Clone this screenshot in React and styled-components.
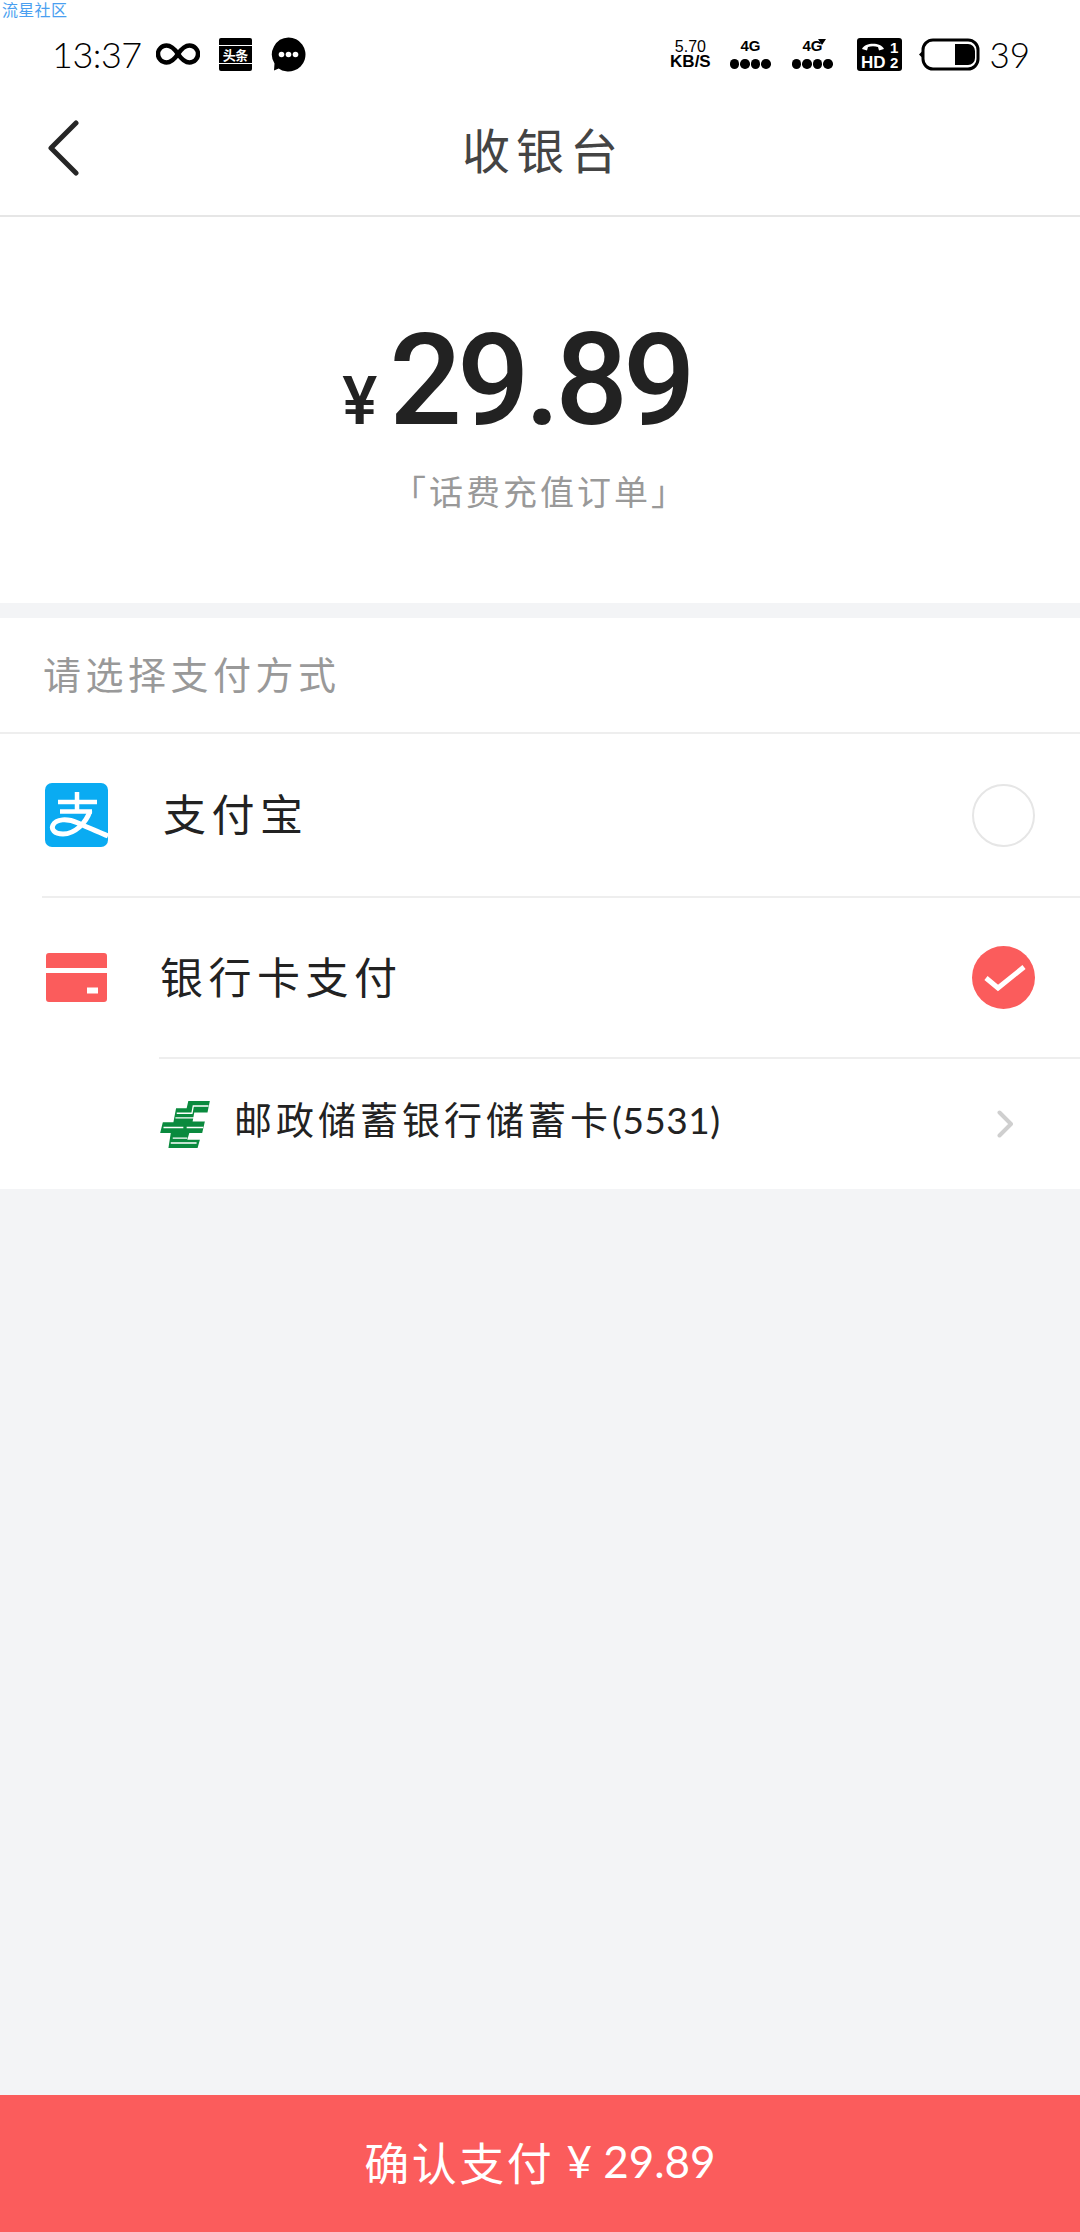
import React from 'react'
import styled, { createGlobalStyle } from 'styled-components'

const cjk = `"Noto Sans CJK SC", "Noto Sans", sans-serif`

const GlobalStyle = createGlobalStyle`
  html, body {
    margin: 0;
    padding: 0;
    background: #f3f4f6;
    font-family: ${cjk};
  }
`
const Page = styled.div`
  position: relative;
  width: 1080px;
  height: 2232px;
  display: flex;
  flex-direction: column;
  overflow: hidden;
`
const Watermark = styled.div`
  position: absolute;
  top: 1px;
  left: 2px;
  font-size: 16px;
  line-height: 16px;
  letter-spacing: 0.3px;
  color: #4a9ff0;
`
const StatusBar = styled.div`
  height: 80px;
  padding: 28px 50px 0 52px;
  box-sizing: border-box;
  background: #fff;
  display: flex;
  align-items: center;
  justify-content: space-between;
`
const StatusGroup = styled.div`
  display: flex;
  align-items: center;
  gap: ${({$gap}) => $gap}px;
`
const Clock = styled.span`
  font-family: Lato, sans-serif;
  font-weight: 300;
  font-size: 36px;
  letter-spacing: -0.5px;
  color: #000;
  line-height: 40px;
  margin-right: -5px;
`
const BatteryLevel = styled(Clock)`
  font-size: 35px;
  letter-spacing: 0;
  margin-right: 0;
`
const Speed = styled.div`
  width: 44px;
  margin-right: -3px;
  font-family: "Liberation Sans", sans-serif;
  font-size: 16px;
  line-height: 15px;
  text-align: center;
  color: #000;
  b { display: block; font-size: 17px; font-weight: 700; }
`
const Signal = styled.div`
  position: relative;
  width: 42px;
  display: flex;
  flex-direction: column;
  align-items: center;
  gap: 7px;
  font-family: "Liberation Sans", sans-serif;
  font-size: 15px;
  line-height: 13px;
  font-weight: 700;
  color: #000;
`
const CallMark = styled.i`
  position: absolute;
  top: 0;
  right: 7px;
  width: 0;
  height: 0;
  border-left: 4px solid transparent;
  border-right: 4px solid transparent;
  border-top: 6px solid #000;
`
const Dots = styled.div`
  display: flex;
  gap: 1px;
  i { width: 9.500px; height: 9.500px; border-radius: 50%; background: #000; }
`
const NewsIcon = styled.div`
  width: 33px;
  height: 33px;
  background: #000;
  border-radius: 2px;
  display: flex;
  align-items: center;
`
const NewsLabel = styled.span`
  width: 100%;
  height: 17px;
  border-top: 1px solid #fff;
  border-bottom: 1px solid #fff;
  color: #fff;
  font-size: 13px;
  font-weight: 700;
  line-height: 17px;
  letter-spacing: -0.5px;
  text-align: center;
`
const HdSlot = styled.div`
  display: flex;
  margin: 0 -4px 0 4px;
`
const Nav = styled.div`
  height: 137px;
  box-sizing: border-box;
  background: #fff;
  border-bottom: 2px solid #e6e6e6;
  display: grid;
  grid-template-columns: 1fr auto 1fr;
  align-items: center;
  padding: 0 47px;
`
const Title = styled.h1`
  margin: 0 0 0 6px;
  font-size: 48px;
  font-weight: 400;
  letter-spacing: 6px;
  color: #444;
  line-height: 60px;
`
const Hero = styled.div`
  height: 386px;
  background: #fff;
  display: flex;
  flex-direction: column;
  align-items: center;
  padding-top: 88px;
  box-sizing: border-box;
`
const Amount = styled.div`
  display: flex;
  align-items: baseline;
  color: #222;
  font-family: Roboto, sans-serif;
  font-weight: 500;
  line-height: 150px;
  height: 150px;
  margin-right: 47px;
`
const Currency = styled.span`
  font-size: 66px;
  margin-right: 12px;
`
const Figure = styled.span`
  font-size: 128px;
  letter-spacing: -5px;
`
const OrderName = styled.div`
  margin-top: 14px;
  font-size: 34px;
  line-height: 44px;
  letter-spacing: 3px;
  color: #999;
`
const Band = styled.div`
  height: 15px;
  background: #f3f4f6;
`
const SectionLabel = styled.div`
  height: 116px;
  box-sizing: border-box;
  background: #fff;
  border-bottom: 2px solid #eee;
  padding: 0 0 6px 43px;
  display: flex;
  align-items: center;
  font-size: 38px;
  letter-spacing: 4.500px;
  color: #999;
`
const List = styled.div`
  background: #fff;
`
const Row = styled.div`
  height: ${({$h}) => $h}px;
  box-sizing: border-box;
  margin-left: ${({$inset}) => $inset}px;
  padding-left: ${({$pad}) => $pad}px;
  padding-right: 45px;
  display: flex;
  align-items: center;
  border-top: ${({$divided}) => ($divided ? '2px solid #eee' : 'none')};
  border-bottom: ${({$underlined}) => ($underlined ? '2px solid #eee' : 'none')};
`
const IconSlot = styled.div`
  width: ${({$w}) => $w}px;
  flex: none;
  display: flex;
`
const Label = styled.div`
  flex: 1;
  font-size: 43px;
  letter-spacing: 5.500px;
  color: #222;
  line-height: 56px;
  margin-bottom: 6px;
`
const BankLabel = styled(Label)`
  font-size: 38px;
  letter-spacing: 4px;
  line-height: 50px;
  margin-bottom: 10px;
  span { letter-spacing: 0.5px; font-size: 37px; font-family: Lato, sans-serif; }
`
const Radio = styled.div`
  width: 63px;
  height: 63px;
  box-sizing: border-box;
  border-radius: 50%;
  border: 2px solid #e6e6e6;
`
const Chevron = styled.div`
  width: 16px;
  margin-right: 22px;
  display: flex;
`
const Spacer = styled.div`
  flex: 1;
  background: #f3f4f6;
`
const PayButton = styled.div`
  height: 137px;
  padding-bottom: 5px;
  box-sizing: border-box;
  background: #fb5c5c;
  color: #fff;
  display: flex;
  align-items: center;
  justify-content: center;
  font-size: 45px;
  letter-spacing: 2.500px;
`
const PayAmount = styled.span`
  font-family: Lato, sans-serif;
  font-size: 44px;
  letter-spacing: 0;
  margin-left: 12px;
`

const InfinityIcon = () => (
  <svg width="44" height="24" viewBox="0 0 44 24">
    <path d="M22 12C18 6 15 3.500 10.500 3.500a8.500 8.500 0 0 0 0 17C15 20.500 18 18 22 12s7-8.500 11.500-8.500a8.500 8.500 0 0 1 0 17C29 20.500 26 18 22 12z" fill="none" stroke="#000" strokeWidth="4.500" />
  </svg>
)
const ChatIcon = () => (
  <svg width="35" height="35" viewBox="0 0 35 35">
    <path d="M17.500 0.500a17 17 0 1 1-9.800 30.900L3 33.500l0.500-7A17 17 0 0 1 17.500 0.500z" fill="#000" />
    <circle cx="10.500" cy="17.500" r="2.800" fill="#fff" />
    <circle cx="17.500" cy="17.500" r="2.800" fill="#fff" />
    <circle cx="24.500" cy="17.500" r="2.800" fill="#fff" />
  </svg>
)
const HdIcon = () => (
  <svg width="45" height="33" viewBox="0 0 45 33">
    <rect width="45" height="33" rx="3" fill="#000" />
    <path d="M5 11c3-7 19-7 22 0l-5 1.500-1-3.500c-3-1-7-1-10 0l-1 3.500z" fill="#fff" />
    <text x="4" y="30" fontFamily="Liberation Sans, sans-serif" fontSize="17" fontWeight="700" fill="#fff">HD</text>
    <text x="33" y="15" fontFamily="Liberation Sans, sans-serif" fontSize="15" fontWeight="700" fill="#fff">1</text>
    <text x="33" y="30" fontFamily="Liberation Sans, sans-serif" fontSize="15" fontWeight="700" fill="#fff">2</text>
  </svg>
)
const BatteryIcon = () => (
  <svg width="62" height="33" viewBox="0 0 62 33">
    <path d="M1 16.500l4-4v8z" fill="#000" />
    <rect x="5" y="2" width="55" height="29" rx="10" fill="none" stroke="#000" strokeWidth="3" />
    <path d="M37 6h13a7 7 0 0 1 7 7v7a7 7 0 0 1-7 7H37z" fill="#000" />
  </svg>
)
const BackIcon = () => (
  <svg width="32" height="56" viewBox="0 0 32 56">
    <path d="M29 3L4 28l25 25" fill="none" stroke="#262626" strokeWidth="5" strokeLinecap="round" strokeLinejoin="round" />
  </svg>
)
const AlipayIcon = () => (
  <svg width="63" height="64" viewBox="0 0 63 64">
    <rect width="63" height="64" rx="7" fill="#0aabf2" />
    <path d="M13 19h39M32 9v19M15 28.500h32" fill="none" stroke="#fff" strokeWidth="4.500" />
    <path d="M45 28C41 40 30 51 18 51 9 51 6 46 8 42 11 36 22 35 33 40 44 45 54 49 63 53" fill="none" stroke="#fff" strokeWidth="5" />
  </svg>
)
const CardIcon = () => (
  <svg width="61" height="49" viewBox="0 0 61 49">
    <path d="M3 0h55a3 3 0 0 1 3 3v12H0V3a3 3 0 0 1 3-3zM0 20h61v26a3 3 0 0 1-3 3H3a3 3 0 0 1-3-3z" fill="#fb5c5c" />
    <rect x="41" y="34.500" width="11" height="6" fill="#fff" />
  </svg>
)
const PostIcon = () => (
  <svg width="50" height="47" viewBox="30 33 150 142">
    <path d="M115 33H180L173 68H133L128 95H165L157 130H118L112 150H150L143 175H55L62 130H30L38 97H70L78 55H110Z" fill="#0a8a3e" />
    <path d="M80 70H126L130 48H176M76 84H170M40 113H100M110 113H160M68 145H112M62 160H140" fill="none" stroke="#fff" strokeWidth="4" />
  </svg>
)
const CheckIcon = () => (
  <svg width="63" height="63" viewBox="0 0 63 63">
    <circle cx="31.500" cy="31.500" r="31.500" fill="#fb5c5c" />
    <path d="M14 32l12 10 26-21" fill="none" stroke="#fff" strokeWidth="5" strokeLinejoin="miter" />
  </svg>
)
const ArrowIcon = () => (
  <svg width="16" height="28" viewBox="0 0 16 28">
    <path d="M2.500 2.500L14 14 2.500 25.500" fill="none" stroke="#cfcfcf" strokeWidth="4" strokeLinecap="round" strokeLinejoin="round" />
  </svg>
)

export default function App() {
  return (
    <Page>
      <GlobalStyle />
      <Watermark>流星社区</Watermark>
      <StatusBar>
        <StatusGroup $gap={19}>
          <Clock>13:37</Clock>
          <InfinityIcon />
          <NewsIcon><NewsLabel>头条</NewsLabel></NewsIcon>
          <ChatIcon />
        </StatusGroup>
        <StatusGroup $gap={20}>
          <Speed>5.70<b>KB/S</b></Speed>
          <Signal>4G<Dots><i /><i /><i /><i /></Dots></Signal>
          <Signal>4G<CallMark /><Dots><i /><i /><i /><i /></Dots></Signal>
          <HdSlot><HdIcon /></HdSlot>
          <StatusGroup $gap={9}>
            <BatteryIcon />
            <BatteryLevel>39</BatteryLevel>
          </StatusGroup>
        </StatusGroup>
      </StatusBar>
      <Nav>
        <BackIcon />
        <Title>收银台</Title>
      </Nav>
      <Hero>
        <Amount>
          <Currency>¥</Currency>
          <Figure>29.89</Figure>
        </Amount>
        <OrderName>「话费充值订单」</OrderName>
      </Hero>
      <Band />
      <SectionLabel>请选择支付方式</SectionLabel>
      <List>
        <Row $h={164} $inset={42} $pad={3} $underlined>
          <IconSlot $w={118}><AlipayIcon /></IconSlot>
          <Label>支付宝</Label>
          <Radio />
        </Row>
        <Row $h={159} $inset={42} $pad={4}>
          <IconSlot $w={114}><CardIcon /></IconSlot>
          <Label>银行卡支付</Label>
          <CheckIcon />
        </Row>
        <Row $h={132} $inset={159} $pad={1} $divided>
          <IconSlot $w={74}><PostIcon /></IconSlot>
          <BankLabel>邮政储蓄银行储蓄卡<span>(5531)</span></BankLabel>
          <Chevron><ArrowIcon /></Chevron>
        </Row>
      </List>
      <Spacer />
      <PayButton>确认支付<PayAmount>¥ 29.89</PayAmount></PayButton>
    </Page>
  )
}
